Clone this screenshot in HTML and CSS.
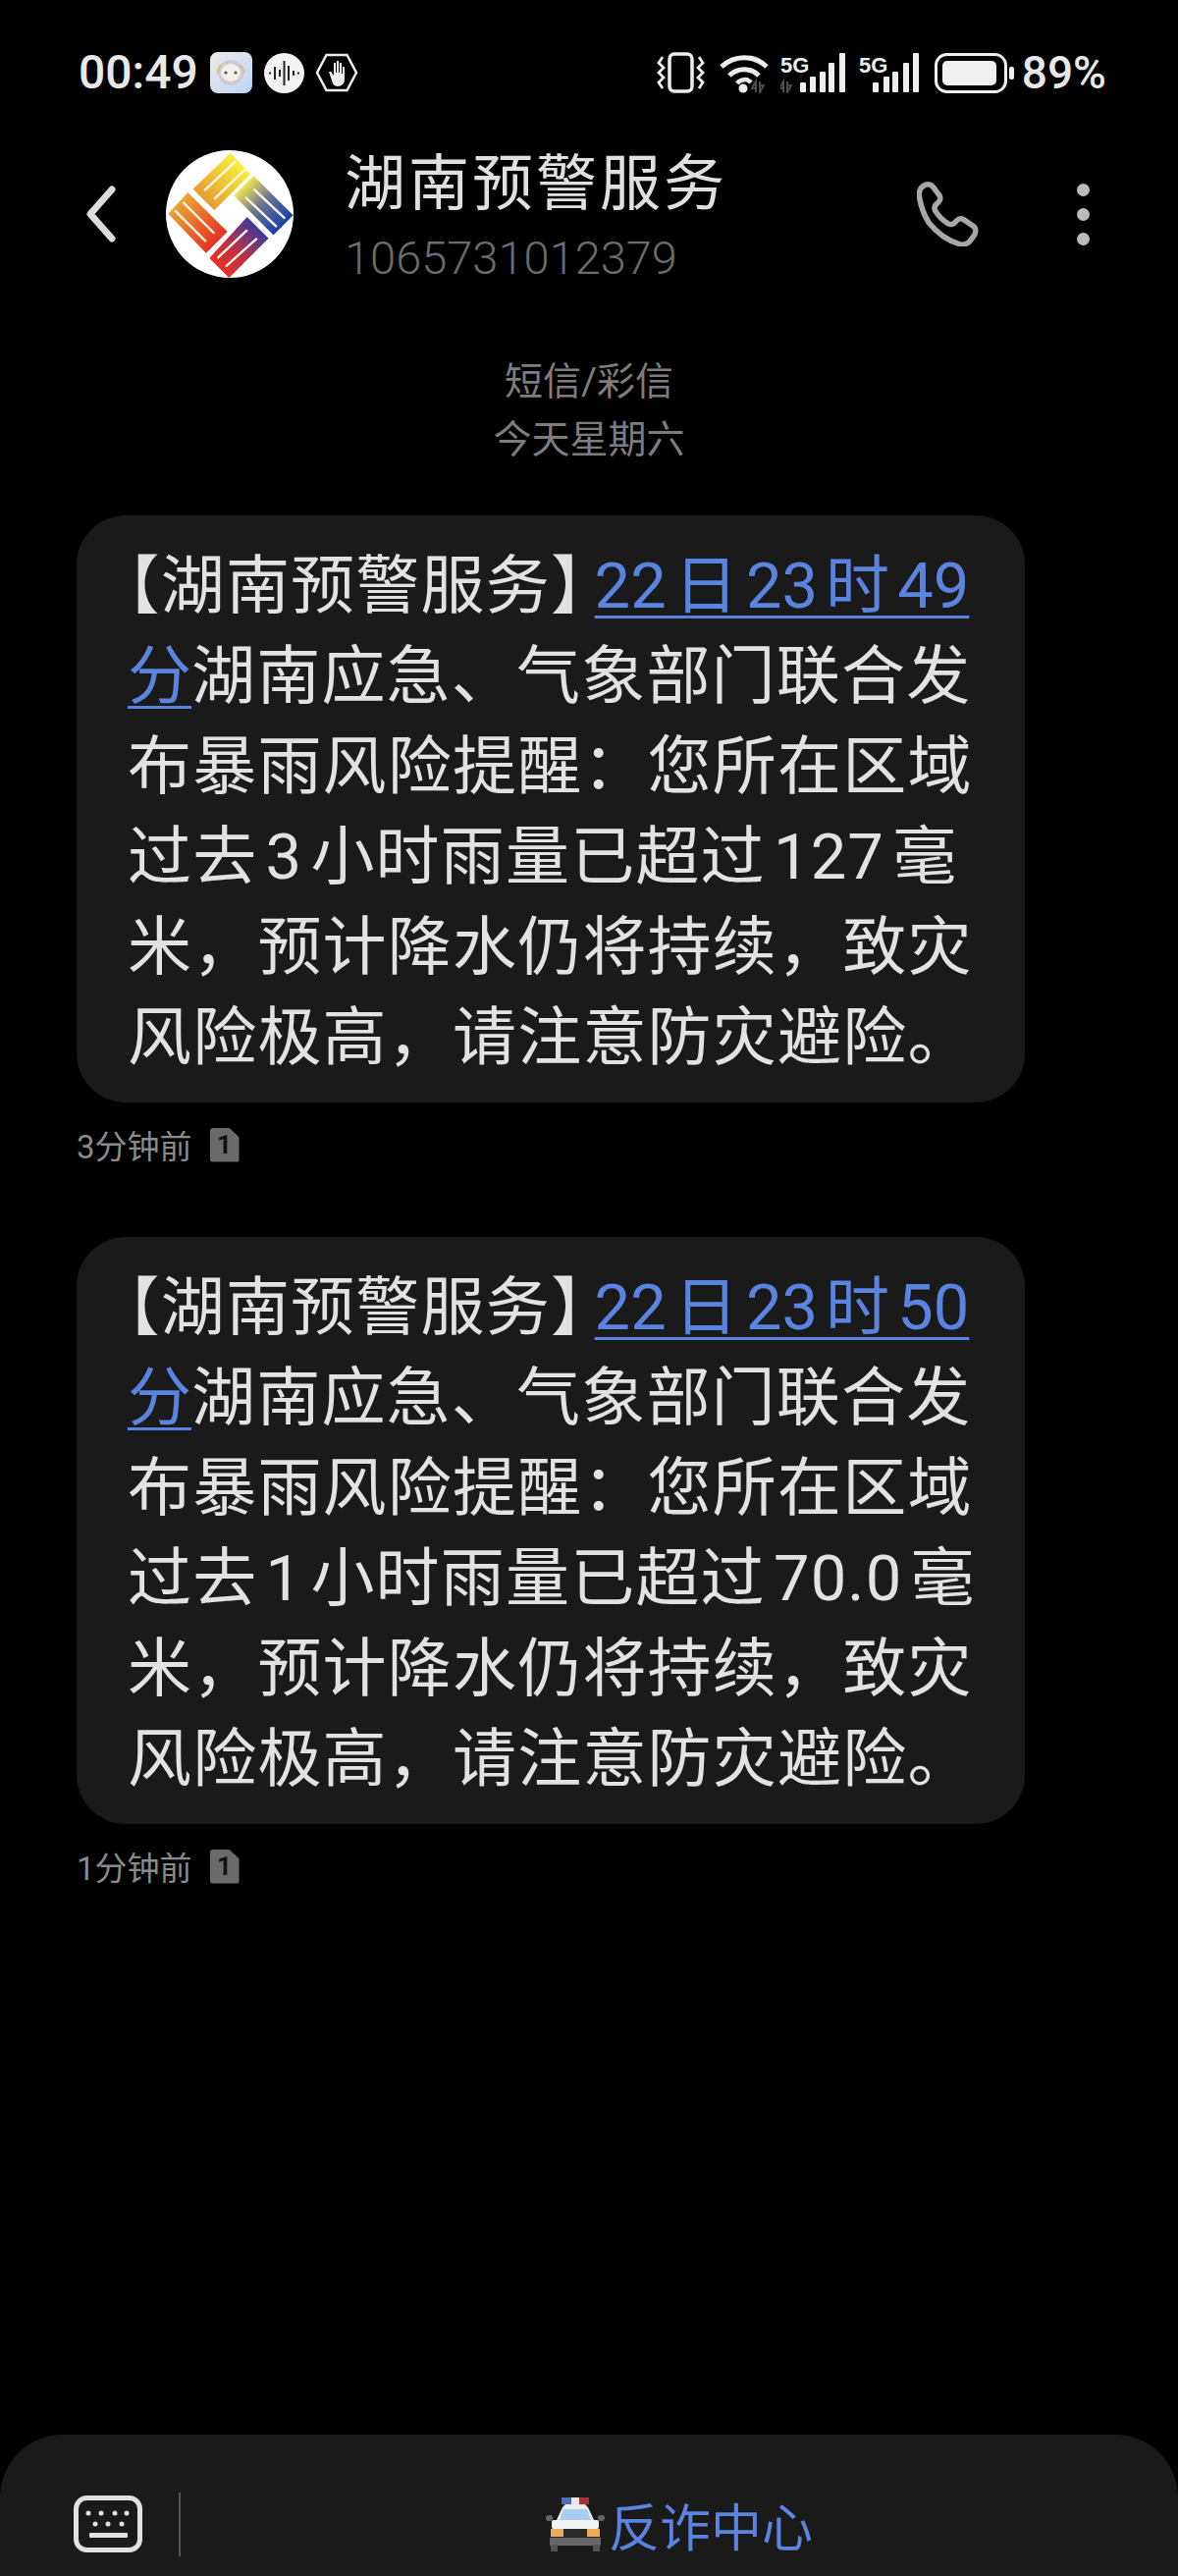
FILE: index.html
```html
<!DOCTYPE html>
<html lang="zh-CN">
<head>
    <meta charset="UTF-8">
    <meta name="viewport" content="width=device-width, initial-scale=1.0">
    <title>湖南预警服务</title>
    <link rel="stylesheet" href="styles.css">
</head>
<body>
    <div class="page">
        <div class="status-bar">
            <span class="time">00:49</span>
            <svg class="icon-robot" viewBox="0 0 43 42">
                <defs>
                    <linearGradient id="robotBg" x1="0" y1="0" x2="1" y2="1">
                        <stop offset="0" stop-color="#ecebe8"/>
                        <stop offset="1" stop-color="#bcd4f6"/>
                    </linearGradient>
                </defs>
                <rect width="43" height="42" rx="8" fill="url(#robotBg)"/>
                <circle cx="21" cy="21" r="13" fill="#cfc9d6"/>
                <ellipse cx="21" cy="21" rx="10" ry="9" fill="#f2eee8"/>
                <circle cx="16" cy="21" r="1.6" fill="#555"/>
                <circle cx="26" cy="21" r="1.6" fill="#555"/>
                <path d="M8 22a13 13 0 0 1 3-9M34 22a13 13 0 0 0-3-9" stroke="#d9c07a" stroke-width="2" fill="none"/>
            </svg>
            <svg class="icon-sound" viewBox="0 0 41 41">
                <circle cx="20.500" cy="20.500" r="20.500" fill="#f2f2f2"/>
                <path d="M5 20.500h2M11 14v13M16 17v7M20.500 8v25M25 13v15M30 18v5M34 20.500h2" stroke="#222" stroke-width="2" fill="none"/>
            </svg>
            <svg class="icon-hand" viewBox="0 0 44 40">
                <path d="M11.500 2h21L42 20 32.500 38h-21L2 20z" fill="none" stroke="#eee" stroke-width="2.500"/>
                <path d="M14 19l4 12c1 2 3 3 5 3 4 0 7-3 7-7V14h-2v7h-1V10h-2v10h-1V8h-2v12h-1V10h-2v13l-3-4z" fill="#eee"/>
            </svg>
            <div class="status-right">
                <svg class="icon-vibrate" viewBox="0 0 49 42">
                    <rect x="13" y="2" width="23" height="38" rx="5" fill="none" stroke="#eee" stroke-width="3.500"/>
                    <path d="M6 5L2 11l5 5-5 5 5 5-5 5 4 6M43 5l4 6-5 5 5 5-5 5 5 5-4 6" fill="none" stroke="#eee" stroke-width="2.800"/>
                </svg>
                <svg class="icon-wifi" viewBox="0 0 50 41">
                    <path d="M2 14a33 33 0 0 1 46 0" fill="none" stroke="#eee" stroke-width="5"/>
                    <path d="M10 23a21 21 0 0 1 30 0" fill="none" stroke="#eee" stroke-width="5"/>
                    <path d="M18 31a9 9 0 0 1 14-1" fill="none" stroke="#eee" stroke-width="4.500"/>
                    <circle cx="24" cy="36" r="4.500" fill="#eee"/>
                    <path d="M37 40V29l-4 7h4M41 29v11l4-7h-4" fill="none" stroke="#4c4c4c" stroke-width="2"/>
                </svg>
                <svg class="icon-signal" viewBox="0 0 67 41">
                    <text class="net-label" x="0" y="20">5G</text>
                    <path d="M3 40V29l-4 7h4M7 29v11l4-7H7" fill="none" stroke="#4c4c4c" stroke-width="2"/>
                    <g fill="#eee">
                        <rect x="20" y="30" width="6" height="10" rx="1"/>
                        <rect x="30" y="24" width="6" height="16" rx="1"/>
                        <rect x="40" y="19" width="6" height="21" rx="1"/>
                        <rect x="49" y="10" width="6" height="30" rx="1"/>
                        <rect x="60" y="0" width="6" height="40" rx="1"/>
                    </g>
                </svg>
                <svg class="icon-signal-b" viewBox="0 0 62 41">
                    <text class="net-label" x="0" y="20">5G</text>
                    <g fill="#eee">
                        <rect x="14" y="30" width="6" height="10" rx="1"/>
                        <rect x="25" y="24" width="6" height="16" rx="1"/>
                        <rect x="34" y="19" width="6" height="21" rx="1"/>
                        <rect x="45" y="10" width="6" height="30" rx="1"/>
                        <rect x="55" y="0" width="6" height="40" rx="1"/>
                    </g>
                </svg>
                <svg class="icon-battery" viewBox="0 0 81 41">
                    <rect x="1.500" y="1.500" width="71" height="38" rx="11" fill="none" stroke="#eee" stroke-width="3"/>
                    <rect x="8" y="8" width="55" height="25" rx="5" fill="#f0f0f0"/>
                    <rect x="76" y="14" width="5" height="13" rx="2" fill="#eee"/>
                </svg>
                <span class="percent">89%</span>
            </div>
        </div>

        <div class="header">
            <svg class="icon-back" viewBox="0 0 31 58">
                <path d="M27 4L5 29l22 25" fill="none" stroke="#dcdcdc" stroke-width="7" stroke-linecap="round" stroke-linejoin="round"/>
            </svg>
            <svg class="avatar" viewBox="58 67 388 388">
                <defs>
                    <linearGradient id="armTop" gradientUnits="userSpaceOnUse" x1="285" y1="105" x2="170" y2="220">
                        <stop offset="0" stop-color="#f6f03c"/>
                        <stop offset="1" stop-color="#e69a32"/>
                    </linearGradient>
                    <linearGradient id="armRight" gradientUnits="userSpaceOnUse" x1="295" y1="175" x2="415" y2="295">
                        <stop offset="0" stop-color="#ece452"/>
                        <stop offset="0.45" stop-color="#6d7690"/>
                        <stop offset="1" stop-color="#173fa8"/>
                    </linearGradient>
                    <linearGradient id="armBottom" gradientUnits="userSpaceOnUse" x1="340" y1="300" x2="220" y2="425">
                        <stop offset="0" stop-color="#3a3aa0"/>
                        <stop offset="0.6" stop-color="#c2303f"/>
                        <stop offset="1" stop-color="#e5302c"/>
                    </linearGradient>
                    <linearGradient id="armLeft" gradientUnits="userSpaceOnUse" x1="95" y1="225" x2="215" y2="345">
                        <stop offset="0" stop-color="#eca632"/>
                        <stop offset="1" stop-color="#e52f24"/>
                    </linearGradient>
                </defs>
                <circle cx="252" cy="261" r="194" fill="#fff"/>
                <polygon points="255,75 315,140 205,250 140,185" fill="url(#armTop)"/>
                <polygon points="325,145 445,265 385,325 265,205" fill="url(#armRight)"/>
                <polygon points="305,270 370,335 250,455 190,395" fill="url(#armBottom)"/>
                <polygon points="125,195 245,315 180,380 65,260" fill="url(#armLeft)"/>
                <g stroke="#fff8e8" stroke-width="7" fill="none">
                    <path d="M175 190l95-90M205 215l95-90"/>
                    <path d="M325 185l95 90M300 210l95 90"/>
                    <path d="M305 310l-90 85M335 335l-95 85"/>
                    <path d="M110 225l95 95M85 250l95 95"/>
                </g>
            </svg>
            <div class="contact">
                <div class="contact-name">湖南预警服务</div>
                <div class="contact-number">1065731012379</div>
            </div>
            <svg class="icon-phone" viewBox="0 0 60 60">
                <path d="M6 4c3-2 7-2 9 1l6 8c1 2 1 4-1 6l-3 3c-1 2-1 3 0 5 3 5 7 9 12 12 2 1 3 1 5 0l3-3c2-2 4-2 6-1l9 6c3 2 3 6 1 9l-3 4c-2 3-6 5-10 4-11-3-21-10-29-20C6 30 3 20 2 12c0-3 1-6 4-8z" fill="none" stroke="#a8a8a8" stroke-width="5"/>
            </svg>
            <div class="more-dots"><i></i><i></i><i></i></div>
        </div>

        <div class="thread-label">
            <div>短信/彩信</div>
            <div>今天星期六</div>
        </div>

        <div class="message">
            <div class="bubble">【湖南预警服务<span class="close-bracket">】</span><a>22日23时49<br>分</a>湖南应急、气象部门联合发<br>布暴雨风险提醒：您所在区域<br>过去3小时雨量已超过127毫<br>米，预计降水仍将持续，致灾<br>风险极高，请注意防灾避险。</div>
            <div class="meta"><span>3分钟前</span><span class="sim">1</span></div>
        </div>

        <div class="message">
            <div class="bubble">【湖南预警服务<span class="close-bracket">】</span><a>22日23时50<br>分</a>湖南应急、气象部门联合发<br>布暴雨风险提醒：您所在区域<br>过去1小时雨量已超过70.0毫<br>米，预计降水仍将持续，致灾<br>风险极高，请注意防灾避险。</div>
            <div class="meta"><span>1分钟前</span><span class="sim">1</span></div>
        </div>

        <div class="bottom-bar">
            <svg class="icon-keyboard" viewBox="0 0 70 58">
                <rect x="2.500" y="2.500" width="65" height="53" rx="11" fill="none" stroke="#e0e0e0" stroke-width="5"/>
                <g fill="#e0e0e0">
                    <circle cx="15" cy="18" r="2.500"/>
                    <circle cx="28" cy="18" r="2.500"/>
                    <circle cx="42" cy="18" r="2.500"/>
                    <circle cx="54" cy="18" r="2.500"/>
                    <circle cx="22" cy="29" r="2.500"/>
                    <circle cx="35" cy="29" r="2.500"/>
                    <circle cx="49" cy="29" r="2.500"/>
                    <rect x="16" y="38" width="39" height="5" rx="1"/>
                </g>
            </svg>
            <div class="divider"></div>
            <div class="menu-item">
                <svg class="icon-police" viewBox="0 0 60 55">
                    <rect x="16" y="0" width="10" height="7" fill="#4c6fb8"/>
                    <rect x="26" y="0" width="8" height="7" fill="#e8e8e8"/>
                    <rect x="34" y="0" width="10" height="7" fill="#a83236"/>
                    <path d="M20 7h20l3 3 7 15H10l7-15z" fill="#ececec"/>
                    <path d="M18 12h24l4 11H14z" fill="#a9cdf0"/>
                    <rect x="0" y="18" width="7" height="6" rx="3" fill="#666"/>
                    <rect x="53" y="18" width="7" height="6" rx="3" fill="#666"/>
                    <rect x="6" y="23" width="48" height="9" rx="2" fill="#f2f2f2"/>
                    <rect x="5" y="32" width="50" height="9" fill="#2a2a2a"/>
                    <rect x="5" y="32" width="13" height="8" fill="#e8ac5a"/>
                    <rect x="42" y="32" width="13" height="8" fill="#e8ac5a"/>
                    <rect x="4" y="41" width="52" height="8" fill="#666"/>
                    <rect x="5" y="48" width="7" height="7" fill="#555"/>
                    <rect x="48" y="48" width="7" height="7" fill="#555"/>
                </svg>
                <span>反诈中心</span>
            </div>
        </div>
    </div>
</body>
</html>
```

FILE: styles.css
```css
body {
    margin: 0;
    padding: 0;
    background-color: #000;
    font-family: Roboto, "Noto Sans CJK SC", sans-serif;
}

.page {
    width: 1200px;
    height: 2624px;
    display: flex;
    flex-direction: column;
    overflow: hidden;
}

svg {
    display: block;
    flex: none;
}

/* status bar */
.status-bar {
    display: flex;
    align-items: center;
    height: 44px;
    margin-top: 52px;
    padding: 0 73px 0 80px;
}

.time {
    font-size: 48px;
    font-weight: 500;
    line-height: 44px;
    color: #e8e8e8;
    margin-right: 12px;
}

.icon-robot { width: 43px; height: 42px; margin-right: 12px; }
.icon-sound { width: 41px; height: 41px; margin-right: 11px; }
.icon-hand { width: 44px; height: 40px; }

.status-right {
    display: flex;
    align-items: center;
    margin-left: auto;
}

.icon-vibrate { width: 49px; height: 42px; margin-right: 15px; }
.icon-wifi { width: 50px; height: 41px; margin-right: 12px; }
.icon-signal { width: 67px; height: 41px; margin-right: 13px; }
.icon-signal-b { width: 62px; height: 41px; margin-right: 15px; }
.icon-battery { width: 81px; height: 41px; margin-right: 8px; }

.net-label {
    font-family: "Liberation Sans Narrow", "Liberation Sans", sans-serif;
    font-size: 22px;
    font-weight: bold;
    fill: #eee;
}

.percent {
    font-size: 46px;
    font-weight: 500;
    line-height: 44px;
    color: #e8e8e8;
}

/* header */
.header {
    display: flex;
    align-items: center;
    height: 140px;
    margin-top: 52px;
    padding-left: 87px;
}

.icon-back { width: 31px; height: 58px; margin-right: 51px; }
.avatar { width: 130px; height: 130px; margin-right: 52px; }

.contact {
    width: 583px;
    padding-top: 6px;
}

.contact-name {
    font-size: 62px;
    line-height: 70px;
    letter-spacing: 3px;
    color: #e0e0e0;
}

.contact-number {
    font-size: 47px;
    line-height: 52px;
    font-weight: 300;
    color: #6b6b6b;
    margin-top: 14px;
}

.icon-phone { width: 66px; height: 66px; margin-right: 97px; }

.more-dots {
    display: flex;
    flex-direction: column;
    gap: 12px;
}

.more-dots i {
    display: block;
    width: 13px;
    height: 13px;
    border-radius: 50%;
    background-color: #bbb;
}

/* thread label */
.thread-label {
    margin-top: 72px;
    text-align: center;
    font-size: 39px;
    line-height: 59px;
    color: #7d7d7d;
}

/* messages */
.message {
    margin: 47px 0 0 78px;
}

.message + .message {
    margin-top: 76px;
}

.bubble {
    width: 966px;
    box-sizing: border-box;
    padding: 26px 0 20px 52px;
    background-color: #1a1a1a;
    border-radius: 50px;
    font-size: 65px;
    line-height: 92px;
    letter-spacing: 1.2px;
    white-space: nowrap;
    color: #e2e2e2;
    text-autospace: normal;
    text-spacing-trim: trim-start;
}

.close-bracket {
    font-feature-settings: "halt";
    margin-right: 11px;
}

.bubble a {
    color: #5b84e0;
    letter-spacing: 0;
    text-decoration: underline;
    text-decoration-thickness: 3px;
    text-underline-offset: 8px;
}

.meta {
    display: flex;
    align-items: center;
    gap: 18px;
    height: 36px;
    margin-top: 25px;
    font-size: 33px;
    color: #8a8a8a;
}

.sim {
    width: 30px;
    height: 35px;
    background-color: #6a6a6a;
    border-radius: 3px;
    clip-path: polygon(0 0, 65% 0, 100% 28%, 100% 100%, 0 100%);
    color: #111;
    font-size: 26px;
    font-weight: bold;
    line-height: 35px;
    text-align: center;
}

/* bottom bar */
.bottom-bar {
    display: flex;
    align-items: center;
    height: 144px;
    margin-top: auto;
    padding: 38px 0 0 75px;
    box-sizing: border-box;
    background-color: #1a1a1a;
    border-radius: 64px 64px 0 0;
}

.icon-keyboard { width: 70px; height: 58px; margin-right: 37px; }

.divider {
    width: 2px;
    height: 65px;
    background-color: #555;
}

.menu-item {
    flex: 1;
    display: flex;
    align-items: center;
    justify-content: center;
    font-size: 52px;
    color: #5b84e0;
}

.icon-police { width: 60px; height: 55px; margin-right: 4px; }
```
